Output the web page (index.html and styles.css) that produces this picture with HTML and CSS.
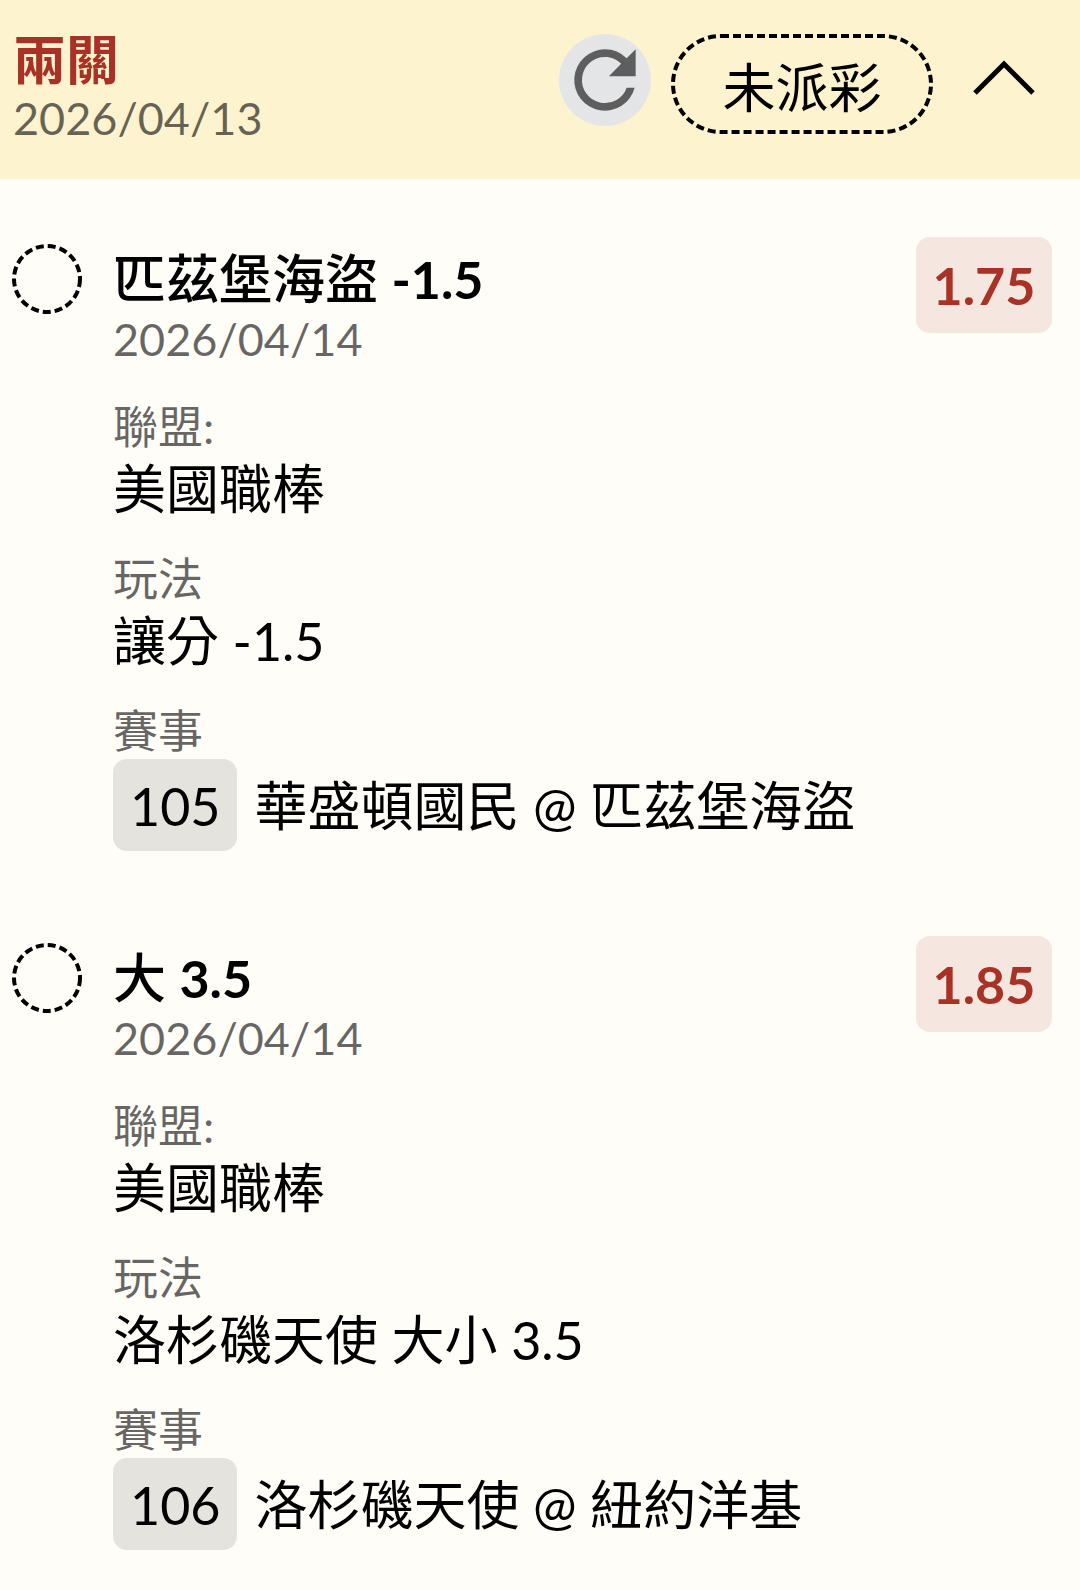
FILE: index.html
```html
<!DOCTYPE html>
<html lang="zh-Hant">
<head>
<meta charset="utf-8">
<meta name="viewport" content="width=device-width, initial-scale=1">
<title>兩關</title>
<link rel="stylesheet" href="styles.css">
</head>
<body>
<header class="slip-header">
  <div class="slip-title">
    <h1 class="slip-name">兩關</h1>
    <time class="date" datetime="2026-04-13">2026/04/13</time>
  </div>
  <button class="refresh" type="button" aria-label="重新整理">
    <svg viewBox="0 0 24 24" aria-hidden="true"><path fill="#5e5e5e" d="M17.650 6.350A7.950 7.950 0 0 0 12 4a8 8 0 1 0 7.730 10h-2.080A6 6 0 1 1 12 6c1.660 0 3.140.690 4.220 1.780L13 11h7V4z"/></svg>
  </button>
  <span class="status">
    <svg class="status-outline" aria-hidden="true"><rect class="dash" x="2" y="2" rx="48" ry="48"/></svg>
    未派彩
  </span>
  <button class="collapse" type="button" aria-label="收合">
    <svg viewBox="0 0 62 36" aria-hidden="true"><path d="M2 33L31 4L60 33" fill="none" stroke="#000" stroke-width="5"/></svg>
  </button>
</header>
<main class="bets">
  <article class="bet">
    <svg class="marker" viewBox="0 0 70 70" aria-hidden="true"><circle class="dash" cx="35" cy="35" r="33"/></svg>
    <div class="details">
      <h2 class="pick">匹茲堡海盜 <span class="num">-1.5</span></h2>
      <time class="date" datetime="2026-04-14">2026/04/14</time>
      <dl class="fields">
        <div class="field"><dt>聯盟:</dt><dd>美國職棒</dd></div>
        <div class="field"><dt>玩法</dt><dd>讓分 <span class="num">-1.5</span></dd></div>
        <div class="field"><dt>賽事</dt><dd class="match"><span class="code num">105</span><span>華盛頓國民 <span class="num">@</span> 匹茲堡海盜</span></dd></div>
      </dl>
    </div>
    <strong class="odds num">1.75</strong>
  </article>
  <article class="bet">
    <svg class="marker" viewBox="0 0 70 70" aria-hidden="true"><circle class="dash" cx="35" cy="35" r="33"/></svg>
    <div class="details">
      <h2 class="pick">大 <span class="num">3.5</span></h2>
      <time class="date" datetime="2026-04-14">2026/04/14</time>
      <dl class="fields">
        <div class="field"><dt>聯盟:</dt><dd>美國職棒</dd></div>
        <div class="field"><dt>玩法</dt><dd>洛杉磯天使 大小 <span class="num">3.5</span></dd></div>
        <div class="field"><dt>賽事</dt><dd class="match"><span class="code num">106</span><span>洛杉磯天使 <span class="num">@</span> 紐約洋基</span></dd></div>
      </dl>
    </div>
    <strong class="odds num">1.85</strong>
  </article>
</main>
</body>
</html>
```
FILE: styles.css
```css
* { box-sizing: border-box; }
body {
  margin: 0;
  background: #fffdf7;
  color: #000;
  font: 53px/64px Lato, "Noto Sans CJK TC", sans-serif;
}
h1, h2, dl, dd { margin: 0; font-size: inherit; }
button { padding: 0; border: 0; background: none; }
svg { display: block; }
.num { font-size: 52px; }
.dash { fill: none; stroke: #000; stroke-width: 4px; stroke-dasharray: 8 4; }
.date { display: block; color: rgba(0, 0, 0, 0.6); font-size: 45px; line-height: 56px; }
.slip-header {
  display: flex;
  align-items: flex-start;
  min-height: 179px;
  padding: 30px 45px 26px 13px;
  background: #fdf3cf;
}
.slip-title { flex: 1; }
.slip-name { color: #a93226; line-height: 60px; }
.refresh { width: 92px; height: 92px; margin: 4px 20px 0 0; border-radius: 50%; background: #e4e5e7; }
.status {
  position: relative;
  width: 262px;
  margin-top: 4px;
  padding-top: 8px;
  line-height: 92px;
  text-align: center;
}
.status-outline { position: absolute; inset: 0; width: 100%; height: 100%; }
.status-outline .dash { width: calc(100% - 4px); height: calc(100% - 4px); }
.collapse { width: 62px; margin: 30px 0 0 40px; }
.bets { display: flex; flex-direction: column; gap: 85px; padding: 58px 28px 40px 12px; }
.bet { display: flex; align-items: flex-start; }
.marker { flex: none; width: 70px; height: 70px; margin: 7px 31px 0 0; }
.details { flex: 1; padding-top: 10px; }
.pick { font-weight: 500; }
.pick .num { font-weight: 700; }
.fields { display: flex; flex-direction: column; gap: 28px; margin-top: 32px; }
.field dt { color: rgba(0, 0, 0, 0.6); font-size: 45px; line-height: 56px; }
.field dd { line-height: 68px; }
.field .match { display: flex; align-items: baseline; gap: 17px; }
.match .code { padding: 2px 17px 0; border-radius: 14px; background: #e5e3dd; line-height: 90px; }
.odds { width: 136px; border-radius: 14px; background: #f5e6e0; color: #a93226; line-height: 96px; text-align: center; }
```
